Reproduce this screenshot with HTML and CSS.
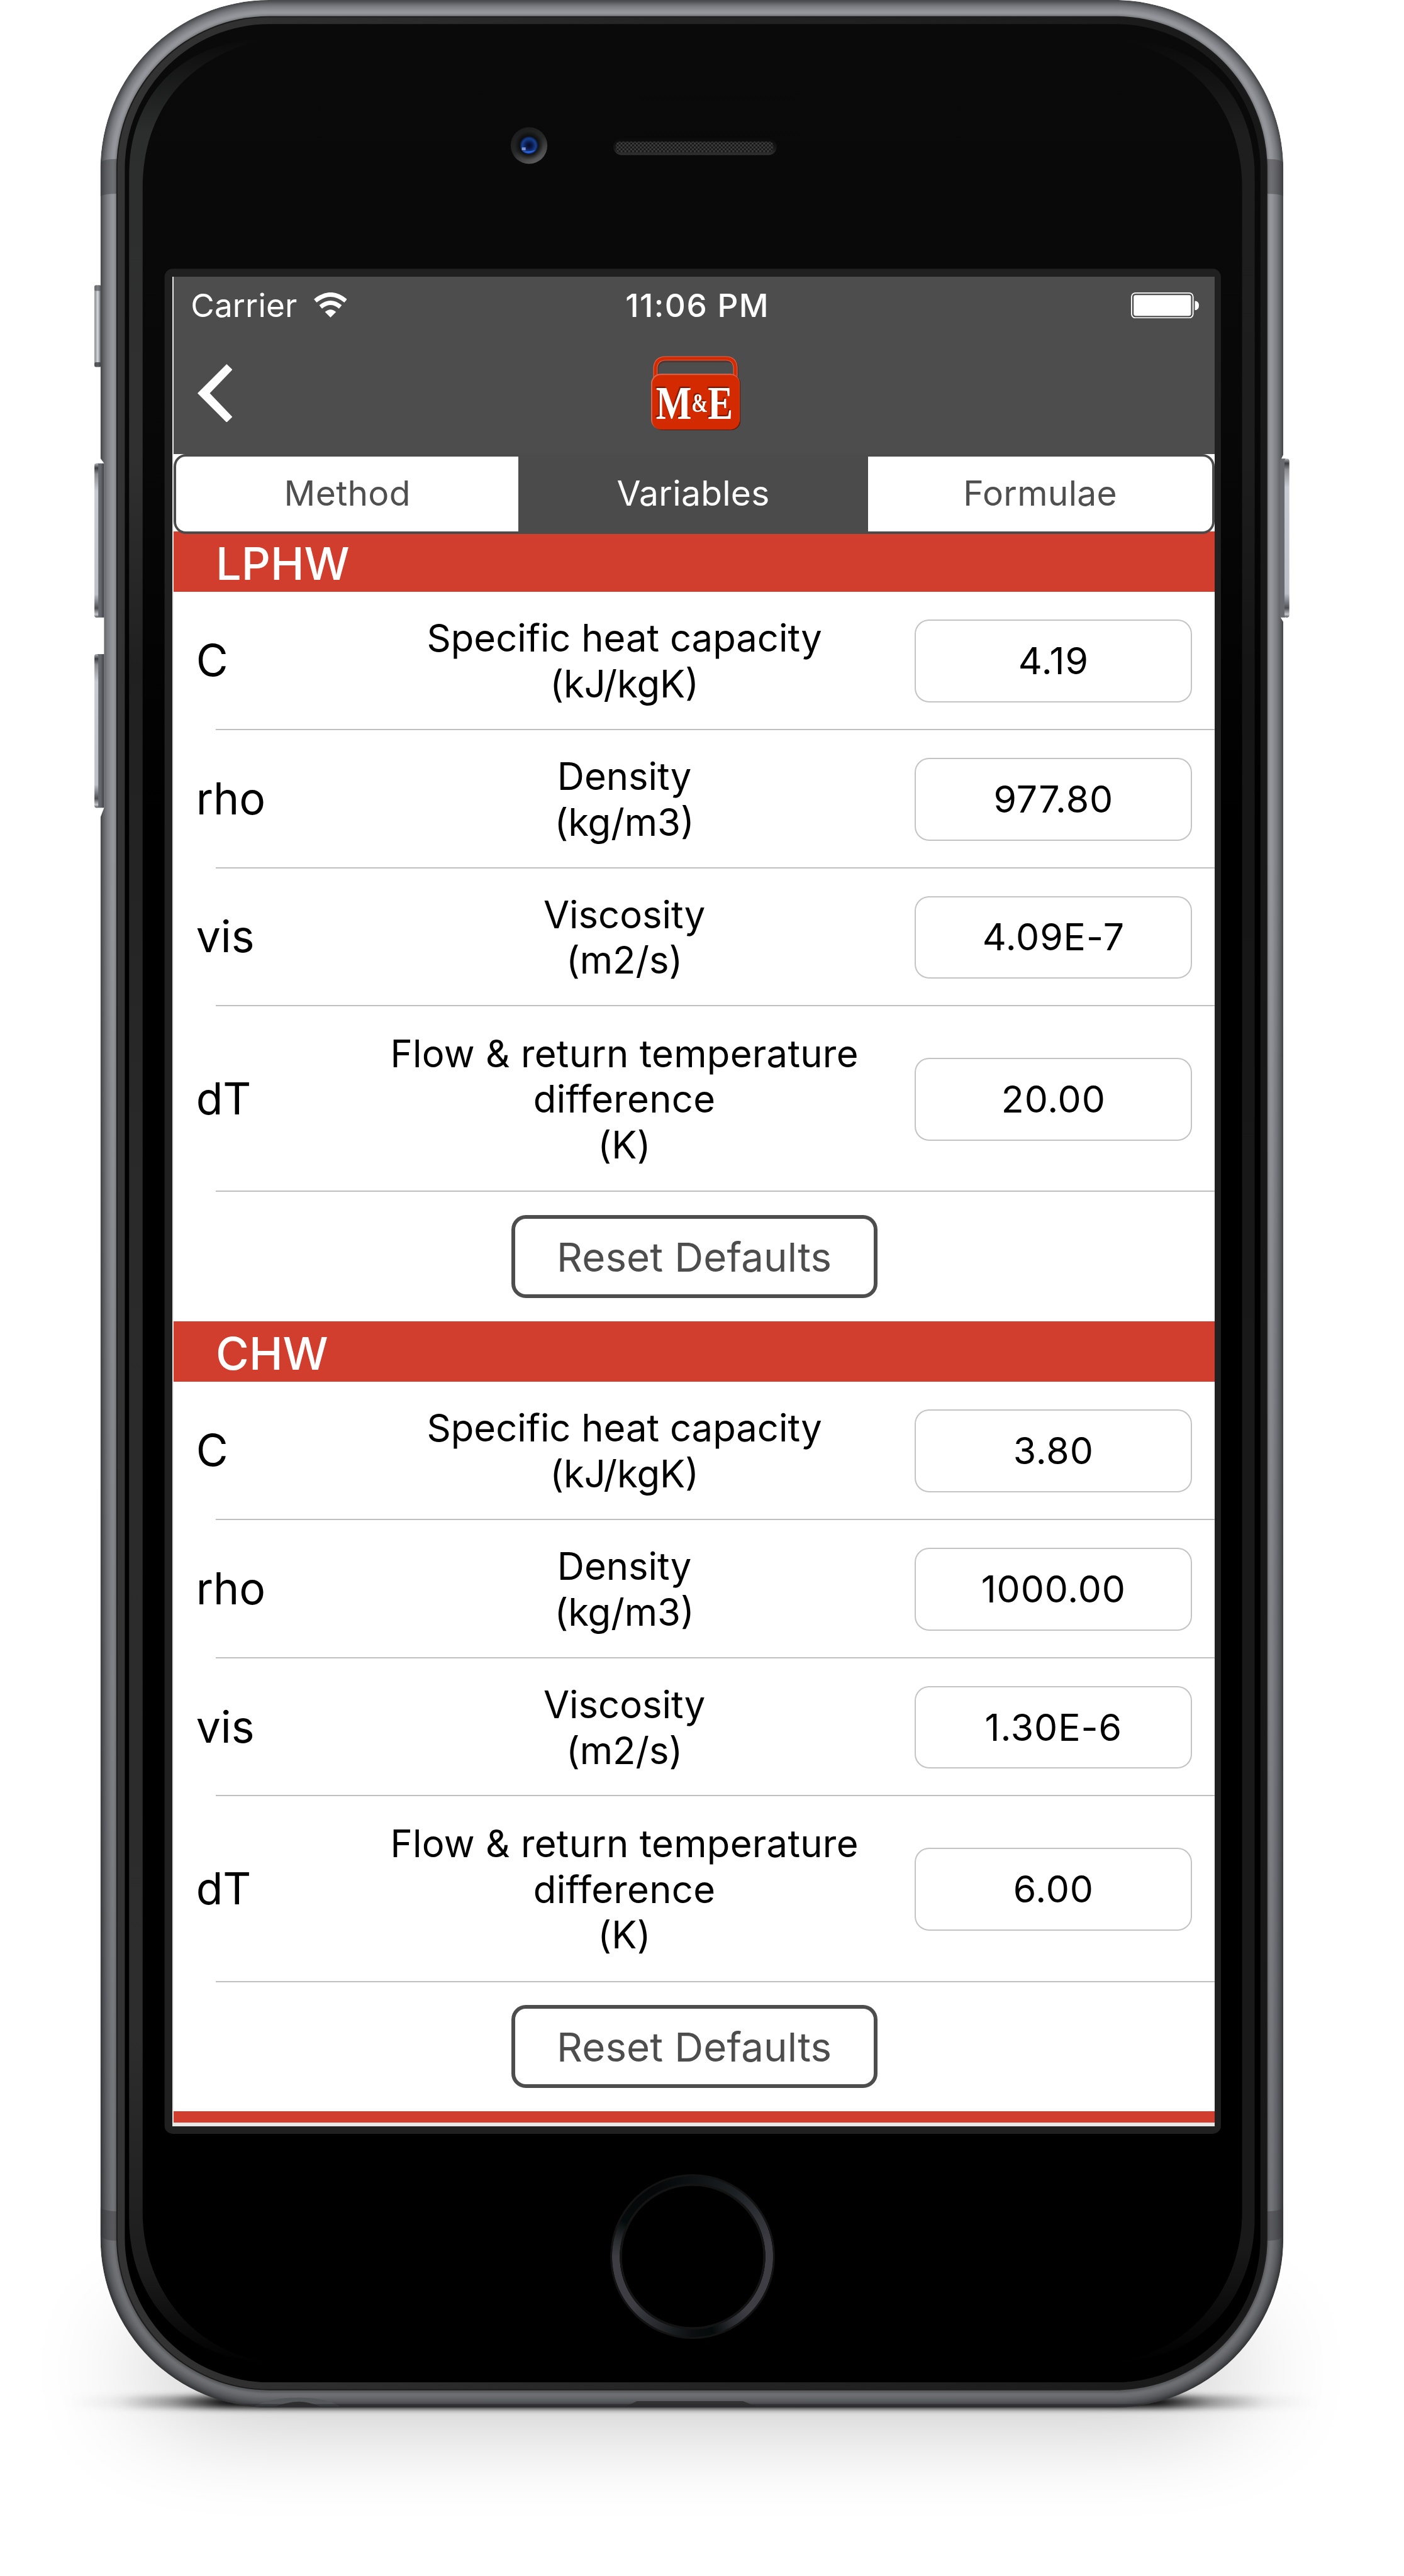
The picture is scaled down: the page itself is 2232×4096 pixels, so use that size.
FILE: index.html
```html
<!DOCTYPE html>
<html lang="en">
<head>
<meta charset="utf-8">
<title>M&amp;E – Variables</title>
<link rel="stylesheet" href="styles.css">
</head>
<body>
<div class="stage">
  <svg class="device" viewBox="0 0 2914 5348" preserveAspectRatio="none" aria-hidden="true">
    <defs>
      <linearGradient id="contact"><stop offset="0" stop-opacity="0"/><stop offset=".04" stop-opacity=".05"/><stop offset=".085" stop-opacity=".35"/><stop offset=".125" stop-opacity=".9"/><stop offset=".16" stop-opacity="1"/><stop offset=".84" stop-opacity="1"/><stop offset=".875" stop-opacity=".9"/><stop offset=".915" stop-opacity=".35"/><stop offset=".96" stop-opacity=".05"/><stop offset="1" stop-opacity="0"/></linearGradient>
      <filter id="wide" filterUnits="userSpaceOnUse" x="-200" y="4300" width="3300" height="1100"><feGaussianBlur stdDeviation="130 95"/></filter>
      <filter id="soft" x="-5%" y="-100%" width="110%" height="300%"><feGaussianBlur stdDeviation="14 6"/></filter>
      <filter id="metalBlur" x="-2%" y="-2%" width="104%" height="104%"><feGaussianBlur stdDeviation="2.2"/></filter>
      <linearGradient id="shade" x2="0" y2="1"><stop offset="0" stop-opacity="0"/><stop offset=".35" stop-opacity="0"/><stop offset="1" stop-opacity=".27"/></linearGradient>
      <linearGradient id="glass" x2="0" y2="1"><stop offset="0" stop-color="#0a0a0a"/><stop offset=".16" stop-color="#080808"/><stop offset=".34" stop-color="#000"/></linearGradient>
      <linearGradient id="ring"><stop offset="0" stop-color="#333"/><stop offset=".5" stop-color="#242424"/><stop offset="1" stop-color="#181818"/></linearGradient>
      <linearGradient id="glintL" gradientUnits="userSpaceOnUse" x1="0" y1="80" x2="0" y2="4910"><stop offset="0" stop-color="#0a0a0a"/><stop offset=".04" stop-color="#2c2e2d"/><stop offset=".18" stop-color="#303030"/><stop offset=".27" stop-color="#202020"/><stop offset=".5" stop-color="#2a2a2a"/><stop offset=".86" stop-color="#2d2d2d"/><stop offset=".96" stop-color="#1c1c1c"/><stop offset="1" stop-color="#000"/></linearGradient>
      <linearGradient id="glintR" gradientUnits="userSpaceOnUse" x1="0" y1="80" x2="0" y2="4910"><stop offset="0" stop-color="#0a0a0a"/><stop offset=".04" stop-color="#1e1e1e"/><stop offset=".18" stop-color="#1d1d1d"/><stop offset=".27" stop-color="#151515"/><stop offset=".6" stop-color="#191919"/><stop offset=".95" stop-color="#191919"/><stop offset="1" stop-color="#000"/></linearGradient>
      <linearGradient id="capV" x2="0" y2="1"><stop offset="0" stop-color="#b5b7bc"/><stop offset=".03" stop-color="#3c3d42"/><stop offset=".07" stop-color="#8c8e94"/><stop offset=".18" stop-color="#c8cbd1"/><stop offset=".85" stop-color="#bcc0c6"/><stop offset=".94" stop-color="#4c4e54"/><stop offset=".98" stop-color="#c4c5ca"/><stop offset="1" stop-color="#56585d"/></linearGradient>
      <linearGradient id="baseL"><stop offset="0" stop-color="#686a70"/><stop offset=".6" stop-color="#62656a"/><stop offset="1" stop-color="#3c3d41"/></linearGradient>
      <linearGradient id="switch"><stop offset="0" stop-color="#85888d"/><stop offset=".5" stop-color="#d4d8dd"/><stop offset="1" stop-color="#55575b"/></linearGradient>
      <linearGradient id="camRim" x1=".2" y1="0" x2=".75" y2="1"><stop offset="0" stop-color="#1b1b1b"/><stop offset=".5" stop-color="#262727"/><stop offset="1" stop-color="#626262"/></linearGradient>
      <radialGradient id="lens"><stop offset="0" stop-color="#060a1c"/><stop offset=".35" stop-color="#0b1a4a"/><stop offset=".75" stop-color="#18408f"/><stop offset="1" stop-color="#0a1530"/></radialGradient>
      <radialGradient id="lensWell"><stop offset=".5" stop-color="#050505"/><stop offset="1" stop-color="#050505" stop-opacity="0"/></radialGradient>
      <linearGradient id="slot" x2="0" y2="1"><stop offset="0" stop-color="#0b0b0b"/><stop offset=".6" stop-color="#181818"/><stop offset="1" stop-color="#333"/></linearGradient>
      <pattern id="mesh" width="8" height="8" patternUnits="userSpaceOnUse"><rect width="8" height="8" fill="#161616"/><rect width="4" height="4" fill="#3e3e3e"/><rect x="4" y="4" width="4" height="4" fill="#3e3e3e"/></pattern>
      <clipPath id="shell"><rect x="208.5" y="0" width="2455" height="4998" rx="350"/></clipPath>
    </defs>

    <rect x="330" y="4800" width="2210" height="240" opacity=".21" filter="url(#wide)"/>
    <rect x="140" y="4974" width="2592" height="26" fill="url(#contact)" filter="url(#soft)"/>

    <rect x="196" y="592" width="14" height="170" rx="4" fill="url(#switch)"/>
    <rect x="196" y="592" width="14" height="12" rx="3" fill="#55575b" opacity=".7"/>
    <rect x="196" y="752" width="14" height="10" rx="3" fill="#3c3d41" opacity=".8"/>

    <g clip-path="url(#shell)">
      <rect x="208.5" y="0" width="2455" height="4998" rx="350" fill="#47484b"/>
      <g filter="url(#metalBlur)">
        <rect x="212" y="3.500" width="2448" height="4991" rx="347" fill="#5c5d61"/>
        <rect x="216" y="7.500" width="2440" height="4983" rx="343" fill="#6d6e73"/>
        <rect x="221" y="12.500" width="2430" height="4973" rx="338" fill="#808187"/>
        <rect x="227" y="18.500" width="2418" height="4961" rx="332" fill="#8f9096"/>
        <rect x="232" y="23.500" width="2408" height="4951" rx="327" fill="#96979c"/>
        <rect x="239" y="30.500" width="2394" height="4937" rx="320" fill="#77787c"/>
      </g>
      <rect x="208" y="0" width="2456" height="4998" fill="url(#shade)"/>
      <g fill="#37383a" opacity=".42">
        <path d="M208 337Q218 330 243 330V402Q218 402 208 407Z"/>
        <path d="M2664 337Q2654 330 2629 330V402Q2654 402 2664 407Z"/>
        <path d="M208 4583Q218 4591 243 4591V4652Q218 4652 208 4643Z"/>
        <path d="M2664 4583Q2654 4591 2629 4591V4652Q2654 4652 2664 4643Z"/>
      </g>
      <path d="M528 4996Q560 4978 620 4978T706 4996Z" fill="#56575a"/>
      <path d="M570 4996Q600 4986 620 4986T665 4996Z" fill="#2f2f30"/>
      <path d="M1298 4996L1322 4985H1542L1570 4996Z" fill="#323233"/>
      <rect x="208" y="4991" width="2456" height="7" fill="#2c2c2e" opacity=".7"/>
    </g>

    <path d="M204 952L209 952L216 962V1677L208 1698H190V952Z" fill="#fff"/>
    <path d="M2668 940L2663 945L2658 955V1282L2664 1292H2680V940Z" fill="#fff"/>
    <g>
      <rect x="200" y="962" width="16" height="320" fill="url(#baseL)"/>
      <rect x="196" y="962" width="8" height="320" rx="4" fill="url(#capV)"/>
      <rect x="200" y="1358" width="16" height="319" fill="url(#baseL)"/>
      <rect x="196" y="1358" width="8" height="319" rx="4" fill="url(#capV)"/>
      <rect x="2658" y="952" width="10" height="330" fill="#686a70"/>
      <rect x="2666" y="952" width="10" height="330" rx="5" fill="url(#capV)"/>
    </g>

    <rect x="241.500" y="33.500" width="2389" height="4929" rx="317" fill="#1b1b1b"/>
    <rect x="244" y="36" width="2384" height="4924" rx="315" fill="url(#ring)"/>
    <rect x="259" y="50" width="2357" height="4896" rx="300" fill="url(#glass)"/>
    <path fill="url(#glintL)" d="M268 360C270 190 385 82 560 80C400 110 296 220 296 390V4592C296 4750 400 4880 549 4902C390 4900 268 4780 268 4605Z"/>
    <path fill="url(#glintR)" d="M2604 360C2602 190 2487 82 2312 80C2472 110 2578 220 2578 390V4592C2578 4750 2472 4880 2323 4902C2482 4900 2604 4780 2604 4605Z"/>

    <circle cx="1098" cy="302" r="38" fill="url(#camRim)"/>
    <circle cx="1098" cy="302" r="30" fill="url(#lensWell)"/>
    <circle cx="1098" cy="302" r="19" fill="url(#lens)"/>
    <path d="M1084 313Q1098 324 1112 311Q1098 316 1084 313Z" fill="#2c62d8"/>
    <rect x="1083" y="306" width="8" height="6" fill="#7d95d8"/>
    <rect x="1273" y="288" width="339" height="34" rx="17" fill="url(#slot)"/>
    <rect x="1278" y="294" width="327" height="22" rx="9" fill="url(#mesh)"/>

    <rect x="341.500" y="558" width="2192.500" height="3872" rx="17" fill="#202020"/>
  </svg>

  <main class="screen">
    <div class="view">
      <header class="nav">
        <div class="status">
          <div class="carrier">Carrier
            <svg class="wifi" viewBox="0 0 69 52"><g fill="none" stroke="#fff" stroke-width="9"><path d="M3 17.500Q34.500 -8.500 66 17.500"/><path d="M14 30Q34.500 13 55 30"/></g><path d="M23 40.500Q34.500 30.500 46 40.500L34.500 52Z" fill="#fff"/></svg>
          </div>
          <div class="clock">11:06 PM</div>
          <svg class="battery" viewBox="0 0 141 54"><rect x="1.200" y="1.200" width="127.600" height="51.600" rx="8" fill="none" stroke="#fff" stroke-width="2.400"/><rect x="5.500" y="5.500" width="119" height="43" rx="4" fill="#fff"/><path d="M132.500 17.500Q141 18 141 27T132.500 37Z" fill="#fff"/></svg>
        </div>
        <div class="bar">
          <svg class="back" viewBox="0 0 72.400 121"><path d="M60.500 0L72.400 11.500L25.400 60.500L72.400 109.500L60.500 121L0 60.500Z" fill="#fff"/></svg>
          <svg class="logo" viewBox="0 0 186 154">
            <path d="M10 42V26Q10 6 30 6H156Q176 6 176 26V42" fill="none" stroke="#5e1d10" stroke-width="9" opacity=".5" transform="translate(1 3)"/>
            <path d="M9 44V27Q9 5 31 5H155Q175 5 175 27V44" fill="none" stroke="#e0644c" stroke-width="9"/>
            <path d="M9 44V27Q9 5 31 5H155Q175 5 175 27V44" fill="none" stroke="#d42a02" stroke-width="6"/>
            <rect x="3" y="39" width="183" height="115" rx="20" fill="#5a1a0e"/>
            <rect x="0" y="37" width="184" height="115" rx="20" fill="#e0644c"/>
            <rect x="2.500" y="39.500" width="181" height="113" rx="18" fill="#d42a02"/>
            <g class="logo-type" fill="#fff"><text x="10" y="130" font-size="97" textLength="74" lengthAdjust="spacingAndGlyphs">M</text><text x="84" y="116" font-size="54" textLength="34" lengthAdjust="spacingAndGlyphs">&amp;</text><text x="118" y="130" font-size="97" textLength="52" lengthAdjust="spacingAndGlyphs">E</text></g>
          </svg>
        </div>
      </header>

      <nav class="tabs">
        <div class="segments">
          <div class="segment">Method</div>
          <div class="segment selected">Variables</div>
          <div class="segment">Formulae</div>
        </div>
      </nav>

      <section>
        <h2 class="title">LPHW</h2>
        <div class="row"><span class="symbol">C</span><span class="label">Specific heat capacity<br>(kJ/kgK)</span><span class="field">4.19</span></div>
        <div class="row"><span class="symbol">rho</span><span class="label">Density<br>(kg/m3)</span><span class="field">977.80</span></div>
        <div class="row"><span class="symbol">vis</span><span class="label">Viscosity<br>(m2/s)</span><span class="field">4.09E-7</span></div>
        <div class="row tall"><span class="symbol">dT</span><span class="label wide">Flow &amp; return temperature<br>difference<br>(K)</span><span class="field">20.00</span></div>
        <div class="actions"><div class="reset">Reset Defaults</div></div>
      </section>

      <section>
        <h2 class="title">CHW</h2>
        <div class="row"><span class="symbol">C</span><span class="label">Specific heat capacity<br>(kJ/kgK)</span><span class="field">3.80</span></div>
        <div class="row"><span class="symbol">rho</span><span class="label">Density<br>(kg/m3)</span><span class="field">1000.00</span></div>
        <div class="row"><span class="symbol">vis</span><span class="label">Viscosity<br>(m2/s)</span><span class="field">1.30E-6</span></div>
        <div class="row tall"><span class="symbol">dT</span><span class="label wide">Flow &amp; return temperature<br>difference<br>(K)</span><span class="field">6.00</span></div>
        <div class="actions"><div class="reset">Reset Defaults</div></div>
      </section>
      <div class="title"></div>
    </div>
  </main>

  <div class="home"></div>
</div>
</body>
</html>
```
FILE: styles.css
```css
:root { --u: 0.76593px; }

* { box-sizing: border-box; }

body {
  margin: 0;
  background: #fff;
  font-family: Inter, "Liberation Sans", sans-serif;
}

.stage {
  position: relative;
  width: 2232px;
  height: 4096px;
  overflow: hidden;
  padding: calc(574 * var(--u)) 0 0 calc(358 * var(--u));
}

.device {
  position: absolute;
  inset: 0;
  width: 2232px;
  height: 4096px;
}

.screen {
  position: relative;
  width: calc(2163 * var(--u));
  height: calc(3840 * var(--u));
  padding-left: calc(3 * var(--u));
  background: #e8e8e8;
}

.view {
  height: calc(3833 * var(--u));
  overflow: hidden;
  background: #fff;
}

/* navigation */
.nav {
  height: calc(368 * var(--u));
  background: #4d4d4d;
  color: #fff;
}

.status {
  display: grid;
  grid-template-columns: 1fr auto 1fr;
  align-items: center;
  height: calc(119 * var(--u));
  padding: 0 calc(32 * var(--u)) 0 calc(35 * var(--u));
  font-size: calc(67 * var(--u));
}

.carrier {
  display: flex;
  align-items: center;
  gap: calc(34 * var(--u));
  letter-spacing: 0.15px;
}

.wifi { width: calc(69 * var(--u)); height: calc(52 * var(--u)); }

.clock {
  padding-left: calc(10 * var(--u));
  font-weight: 550;
  letter-spacing: 1.5px;
}

.battery {
  width: calc(141 * var(--u));
  height: calc(54 * var(--u));
  justify-self: end;
}

.bar {
  display: grid;
  grid-template-columns: 1fr auto 1fr;
  align-items: center;
  height: calc(246 * var(--u));
  padding: 0 calc(43 * var(--u)) 0 calc(49 * var(--u));
}

.back { width: calc(72.4 * var(--u)); height: calc(121 * var(--u)); }

.logo { width: calc(186 * var(--u)); height: calc(154 * var(--u)); }

.logo-type {
  font-family: "Liberation Serif", serif;
  font-weight: 700;
  filter: drop-shadow(-2px -3px 1px #7a1a06);
}

/* segmented control */
.tabs {
  height: calc(161 * var(--u));
  padding-top: calc(1 * var(--u));
}

.segments {
  position: relative;
  display: grid;
  grid-template-columns: 709fr 726fr 713fr;
  height: calc(166 * var(--u));
  border: 4px solid #4b4b4b;
  border-radius: calc(26 * var(--u));
  background: #4b4b4b;
  color: #fff;
  font-size: calc(72 * var(--u));
  letter-spacing: 0.3px;
}

.segment {
  display: flex;
  align-items: center;
  justify-content: center;
  padding-bottom: 3px;
  background: #fff;
  color: #4f4f4f;
}

.segment:first-child { border-radius: calc(20 * var(--u)) 0 0 calc(20 * var(--u)); }
.segment:last-child { border-radius: 0 calc(20 * var(--u)) calc(20 * var(--u)) 0; }
.segment.selected { background: #4b4b4b; color: #fff; }

/* variable lists */
.title {
  display: flex;
  align-items: center;
  height: calc(126 * var(--u));
  margin: 0;
  padding: calc(6 * var(--u)) 0 0 calc(87 * var(--u));
  background: #d23e2d;
  color: #fff;
  font-size: calc(94 * var(--u));
  font-weight: 550;
}

.row {
  display: grid;
  grid-template-columns: calc(389 * var(--u)) calc(1000 * var(--u)) calc(576 * var(--u));
  align-items: center;
  height: calc(286.8 * var(--u));
  padding-left: calc(46 * var(--u));
  background: linear-gradient(#bfbfc2, #bfbfc2) right bottom / calc(2073 * var(--u)) 2px no-repeat;
}

.row.tall { height: calc(385.4 * var(--u)); }

.symbol {
  padding-bottom: 3px;
  font-size: calc(91 * var(--u));
  color: #000;
}

.label {
  font-size: calc(78 * var(--u));
  line-height: calc(95 * var(--u));
  text-align: center;
  white-space: nowrap;
}

.label.wide { letter-spacing: 0.3px; }

.field {
  display: flex;
  align-items: center;
  justify-content: center;
  height: calc(172 * var(--u));
  margin-left: calc(102.7 * var(--u));
  margin-right: calc(-102.7 * var(--u));
  padding-bottom: 1px;
  border: 2px solid #c4c4c4;
  border-radius: calc(30 * var(--u));
  font-size: calc(77 * var(--u));
  letter-spacing: 0.9px;
}

.actions {
  display: flex;
  justify-content: center;
  align-items: center;
  height: calc(268.2 * var(--u));
}

.reset {
  display: flex;
  align-items: center;
  justify-content: center;
  width: calc(760 * var(--u));
  height: calc(172 * var(--u));
  border: 6px solid #4d4d4d;
  border-radius: calc(30 * var(--u));
  color: #4d4d4d;
  font-size: calc(83 * var(--u));
  letter-spacing: 0.15px;
}

/* home button ring */
.home {
  position: relative;
  width: calc(342 * var(--u));
  height: calc(342 * var(--u));
  margin: calc(99 * var(--u)) 0 0 calc(908 * var(--u));
  border-radius: 50%;
  background:
    radial-gradient(circle closest-side, #000 85.5%, #131313 86%, #131313 88.3%, transparent 88.7%, transparent 97.3%, #131313 97.8%),
    conic-gradient(#0d1113, #1a1f22 30deg, #303238 60deg, #3d3d43 80deg, #3d3d43 135deg, #2a2b30 150deg, #050a0a 165deg, #0a0e10 180deg, #25272b 205deg, #3d3d43 230deg, #3d3d43 270deg, #2a2e30 282deg, #050a0b 297deg, #050708 330deg, #0d1113);
}
```
